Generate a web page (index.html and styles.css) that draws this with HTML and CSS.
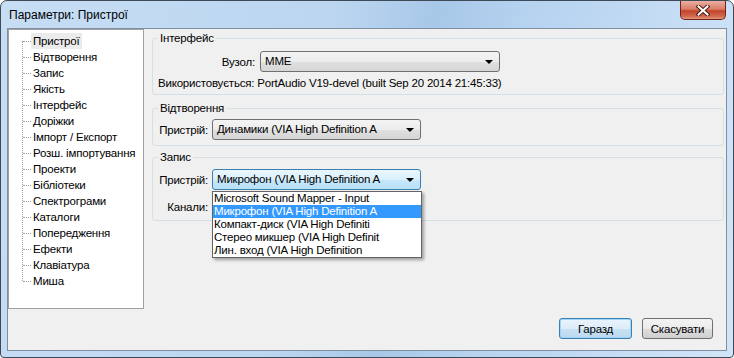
FILE: index.html
```html
<!DOCTYPE html>
<html>

<head>
  <meta charset="utf-8">
  <title>Параметри: Пристрої</title>
  <link rel="stylesheet" href="styles.css">
</head>

<body>
  <div class="window">
    <div class="titlebar">
      <span class="title">Параметри: Пристрої</span>
      <div class="close-btn">
        <svg width="14" height="11" viewBox="0 0 14 11">
          <path d="M2.5 1.5 L11.5 9.5 M11.5 1.5 L2.5 9.5" stroke="#4a1e16" stroke-width="4" stroke-linecap="square"/>
          <path d="M2.5 1.5 L11.5 9.5 M11.5 1.5 L2.5 9.5" stroke="#fff" stroke-width="2" stroke-linecap="square"/>
        </svg>
      </div>
    </div>

    <div class="client">
      <div class="main">
        <!-- дерево розділів -->
        <ul class="tree">
          <li class="selected"><span>Пристрої</span></li>
          <li><span>Відтворення</span></li>
          <li><span>Запис</span></li>
          <li><span>Якість</span></li>
          <li><span>Інтерфейс</span></li>
          <li><span>Доріжки</span></li>
          <li><span>Імпорт / Експорт</span></li>
          <li><span>Розш. імпортування</span></li>
          <li><span>Проекти</span></li>
          <li><span>Бібліотеки</span></li>
          <li><span>Спектрограми</span></li>
          <li><span>Каталоги</span></li>
          <li><span>Попередження</span></li>
          <li><span>Ефекти</span></li>
          <li><span>Клавіатура</span></li>
          <li><span>Миша</span></li>
        </ul>

        <div class="pages">
          <fieldset class="group group-host">
            <legend>Інтерфейс</legend>
            <div class="row">
              <label class="label label-host">Вузол:</label>
              <div class="combo combo-host"><span>MME</span></div>
            </div>
            <div class="info">Використовується: PortAudio V19-devel (built Sep 20 2014 21:45:33)</div>
          </fieldset>

          <fieldset class="group group-play">
            <legend>Відтворення</legend>
            <div class="row">
              <label class="label">Пристрій:</label>
              <div class="combo"><span>Динамики (VIA High Definition A</span></div>
            </div>
          </fieldset>

          <fieldset class="group group-rec">
            <legend>Запис</legend>
            <div class="row">
              <label class="label">Пристрій:</label>
              <div class="combo focused">
                <span>Микрофон (VIA High Definition A</span>
                <ul class="dropdown">
                  <li>Microsoft Sound Mapper - Input</li>
                  <li class="hot">Микрофон (VIA High Definition A</li>
                  <li>Компакт-диск (VIA High Definiti</li>
                  <li>Стерео микшер (VIA High Definit</li>
                  <li>Лин. вход (VIA High Definition</li>
                </ul>
              </div>
            </div>
            <div class="row row-next">
              <label class="label">Канали:</label>
              <!-- закрито списком -->
              <div class="combo combo-small"></div>
            </div>
          </fieldset>
        </div>
      </div>

      <div class="buttons">
        <button class="btn btn-ok">Гаразд</button>
        <button class="btn btn-cancel">Скасувати</button>
      </div>
    </div>
  </div>
</body>

</html>
```

FILE: styles.css
```css
* {
  box-sizing: border-box;
}

body {
  margin: 0;
  font-family: "Liberation Sans", "DejaVu Sans", sans-serif;
  font-size: 11.5px;
  letter-spacing: -0.2px;
  color: #000;
  background: #fff;
}

.window {
  width: 734px;
  height: 358px;
  border: 1px solid #3e4a57;
  border-radius: 7px 7px 4px 4px;
  background: linear-gradient(100deg, #c6ddf4 0%, #bcd6f0 42%, #a8c8e9 55%, #b5d2ef 66%, #d2e5f8 100%);
  padding: 0 6px 6px 6px;
  display: flex;
  flex-direction: column;
}

.titlebar {
  height: 27px;
  display: flex;
  align-items: flex-start;
  padding-left: 2px;
}

.title {
  font-size: 12px;
  letter-spacing: 0;
  line-height: 15px;
  margin-top: 7px;
}

.close-btn {
  margin-left: auto;
  margin-right: 1px;
  width: 46px;
  height: 19px;
  border: 1px solid #6e2418;
  border-top: none;
  border-radius: 0 0 5px 5px;
  background: linear-gradient(#eab0a2 0%, #d97d69 45%, #c4432b 55%, #cf6a4f 85%, #e39a7d 100%);
  display: flex;
  align-items: center;
  justify-content: center;
}

.client {
  flex: 1;
  border: 1px solid #7f8ea0;
  background: #f0f0f0;
  display: flex;
  flex-direction: column;
}

.main {
  display: flex;
  height: 280px;
}

/* дерево */
.tree {
  width: 136px;
  margin: 0;
  padding: 3px 0 0 0;
  list-style: none;
  background: #fff;
  border: 1px solid #a0a0a0;
  position: relative;
}

.tree::before {
  content: "";
  position: absolute;
  left: 13px;
  top: 11px;
  height: 240px;
  border-left: 1px dotted #a0a0a0;
}

.tree li {
  position: relative;
  height: 16px;
  line-height: 16px;
  padding-left: 22px;
  white-space: nowrap;
}

.tree li::before {
  content: "";
  position: absolute;
  left: 14px;
  top: 8px;
  width: 8px;
  border-top: 1px dotted #a0a0a0;
}

.tree li span {
  display: inline-block;
  height: 16px;
  padding: 0 2px;
}

.tree li.selected span {
  background: #ebebeb;
}

/* сторінка параметрів */
.pages {
  flex: 1;
  padding: 2px 2px 0 8px;
}

.group {
  margin: 0;
  min-width: 0;
  border: 1px solid #d5dfe5;
  border-radius: 3px;
  padding: 5px 8px 4px 5px;
}

.group legend {
  padding: 0 2px;
  line-height: 14px;
}

.group-host {
  padding-top: 6px;
  padding-bottom: 3px;
  margin-bottom: 6px;
}

.group-play {
  padding-top: 4px;
  padding-bottom: 5px;
  margin-bottom: 4px;
}

.group-rec {
  padding-top: 5px;
  padding-bottom: 3px;
}

.row {
  display: flex;
  align-items: center;
  height: 21px;
}

.row-next {
  margin-top: 6px;
}

.label {
  width: 50px;
  margin-right: 4px;
  text-align: right;
  white-space: nowrap;
}

.label-host {
  width: 97px;
  margin-right: 5px;
}

.info {
  margin-top: 3px;
  line-height: 16px;
  white-space: nowrap;
}

.combo {
  position: relative;
  width: 209px;
  height: 21px;
  line-height: 19px;
  padding-left: 4px;
  border: 1px solid #707070;
  border-radius: 3px;
  background: linear-gradient(#f4f4f4 0%, #ececec 50%, #e0e0e0 51%, #d6d6d6 100%);
  white-space: nowrap;
}

.combo::after {
  content: "";
  position: absolute;
  right: 6px;
  top: 8px;
  border-left: 4px solid transparent;
  border-right: 4px solid transparent;
  border-top: 4px solid #000;
}

.combo-host {
  width: 240px;
}

.combo-small {
  width: 120px;
}

.combo.focused {
  border-color: #3c7fb1;
  background: linear-gradient(#eaf6fd 0%, #d9f0fc 50%, #c6e8fc 51%, #b8e0f7 100%);
}

.dropdown {
  position: absolute;
  z-index: 2;
  left: -1px;
  top: 21px;
  width: 210px;
  margin: 0;
  padding: 0;
  list-style: none;
  background: #fff;
  border: 1px solid #646464;
  box-shadow: 2px 2px 3px rgba(0, 0, 0, 0.35);
}

.dropdown li {
  height: 13px;
  line-height: 13px;
  padding-left: 1px;
  white-space: nowrap;
  overflow: hidden;
}

.dropdown li.hot {
  background: #3399ff;
  color: #fff;
}

/* кнопки */
.buttons {
  display: flex;
  justify-content: flex-end;
  gap: 10px;
  padding: 9px 13px 11px 0;
}

.btn {
  height: 21px;
  padding: 0;
  font-family: inherit;
  font-size: 11.5px;
  letter-spacing: -0.2px;
  color: #000;
  border: 1px solid #707070;
  border-radius: 3px;
  background: linear-gradient(#f3f3f3 0%, #ebebeb 50%, #dddddd 51%, #cfcfcf 100%);
}

.btn-ok {
  width: 73px;
  border-color: #3c7fb1;
  box-shadow: inset 0 0 0 1px #9fd5f7;
  background: linear-gradient(#eaf4fc 0%, #dcecf8 50%, #c9e1f3 51%, #bcd9ef 100%);
}

.btn-cancel {
  width: 71px;
}
```
